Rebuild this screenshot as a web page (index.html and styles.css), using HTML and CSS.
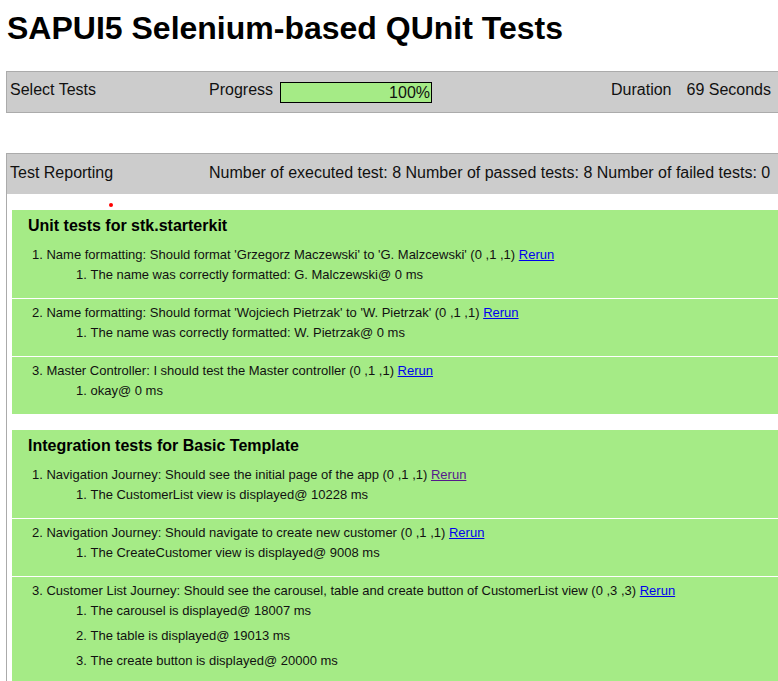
FILE: index.html
```html
<!DOCTYPE html>
<html>
<head>
<meta charset="utf-8">
<title>SAPUI5 Selenium-based QUnit Tests</title>
<link rel="stylesheet" href="styles.css">
</head>
<body>
<h1 class="title">SAPUI5 Selenium-based QUnit Tests</h1>

<div class="box toolbar">
  <div class="row">
    <span class="cell-first">Select Tests</span>
    <span class="label">Progress</span>
    <span class="progress"><span class="progress-fill">100%</span></span>
    <span class="duration">Duration</span>
    <span class="seconds">69 Seconds</span>
  </div>
</div>

<div class="box report">
  <div class="report-head">
    <div class="row">
      <span class="cell-first">Test Reporting</span>
      <span class="stats">Number of executed test: 8 Number of passed tests: 8 Number of failed tests: 0</span>
    </div>
  </div>
  <span class="dot"></span>
  <div class="content">
    <div class="panel">
      <h2 class="panel-title">Unit tests for stk.starterkit</h2>
      <ol class="tests">
        <li class="test">Name formatting: Should format 'Grzegorz Maczewski' to 'G. Malzcewski' (0 ,1 ,1) <a href="#" class="rerun">Rerun</a>
          <ol class="asserts"><li>The name was correctly formatted: G. Malczewski@ 0 ms</li></ol>
        </li>
        <li class="test">Name formatting: Should format 'Wojciech Pietrzak' to 'W. Pietrzak' (0 ,1 ,1) <a href="#" class="rerun">Rerun</a>
          <ol class="asserts"><li>The name was correctly formatted: W. Pietrzak@ 0 ms</li></ol>
        </li>
        <li class="test">Master Controller: I should test the Master controller (0 ,1 ,1) <a href="#" class="rerun">Rerun</a>
          <ol class="asserts"><li>okay@ 0 ms</li></ol>
        </li>
      </ol>
    </div>
    <div class="panel">
      <h2 class="panel-title">Integration tests for Basic Template</h2>
      <ol class="tests">
        <li class="test">Navigation Journey: Should see the initial page of the app (0 ,1 ,1) <a href="#" class="rerun visited">Rerun</a>
          <ol class="asserts"><li>The CustomerList view is displayed@ 10228 ms</li></ol>
        </li>
        <li class="test">Navigation Journey: Should navigate to create new customer (0 ,1 ,1) <a href="#" class="rerun">Rerun</a>
          <ol class="asserts"><li>The CreateCustomer view is displayed@ 9008 ms</li></ol>
        </li>
        <li class="test">Customer List Journey: Should see the carousel, table and create button of CustomerList view (0 ,3 ,3) <a href="#" class="rerun">Rerun</a>
          <ol class="asserts">
            <li>The carousel is displayed@ 18007 ms</li>
            <li>The table is displayed@ 19013 ms</li>
            <li>The create button is displayed@ 20000 ms</li>
          </ol>
        </li>
      </ol>
    </div>
  </div>
</div>
</body>
</html>
```

FILE: styles.css
```css
html, body {
  margin: 0;
  padding: 0;
  overflow: hidden;
  background: #fff;
}
body {
  font-family: "Liberation Sans", Arial, sans-serif;
  color: #111;
  width: 778px;
  height: 681px;
}
.title {
  font-size: 32px;
  font-weight: bold;
  margin: 10px 0 24px 7px;
  line-height: 37px;
  color: #000;
}
.box {
  margin-left: 6px;
  width: 800px;
  border: 1px solid #ababab;
  border-right: none;
}
.toolbar {
  background: #cccccc;
  height: 40px;
  margin-bottom: 40px;
}
.row {
  display: flex;
  align-items: flex-start;
  width: 761px;
  padding: 8px 0 0 3px;
  font-size: 16px;
  line-height: 20px;
}
.cell-first {
  flex: 0 0 199px;
}
.label {
  margin-right: 7px;
}
.progress {
  display: block;
  width: 150px;
  height: 19px;
  border: 1px solid #000;
  background: #a5eb86;
  margin-top: 2px;
}
.progress-fill {
  display: block;
  text-align: right;
  padding-right: 1px;
  line-height: 19px;
}
.duration {
  margin-left: auto;
  margin-right: 15px;
}
.report {
  position: relative;
  border-bottom: none;
  height: 600px;
}
.report-head {
  background: #cccccc;
  height: 40px;
}
.report-head .row {
  padding-top: 9px;
}
.dot {
  position: absolute;
  left: 102px;
  top: 49px;
  width: 4px;
  height: 4px;
  border-radius: 50%;
  background: #f00;
}
.content {
  padding: 16px 0 0 5px;
}
.panel {
  background: #a5eb86;
  margin-bottom: 16px;
  font-size: 13px;
  line-height: 20px;
}
.panel-title {
  font-size: 16px;
  font-weight: bold;
  line-height: 20px;
  margin: 0;
  padding: 6px 0 5px 16px;
  color: #000;
}
.tests {
  margin: 0;
  padding: 0;
  list-style: decimal inside;
}
.test {
  padding: 4px 0 8px 20px;
  border-bottom: 1px solid #fff;
}
.test:last-child {
  border-bottom: none;
}
.asserts {
  margin: 0;
  padding: 0 0 0 44px;
  list-style: decimal inside;
}
.asserts li {
  margin-bottom: 5px;
}
.rerun {
  color: #0000ee;
  text-decoration: underline;
}
.rerun.visited {
  color: #551a8b;
}
```
